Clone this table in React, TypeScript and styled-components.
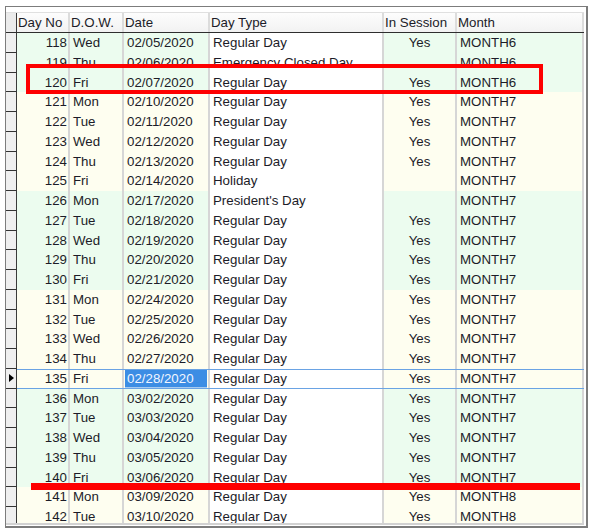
import React from "react";
import styled, { createGlobalStyle, css } from "styled-components";

const Global = createGlobalStyle`
  html, body { margin: 0; padding: 0; background: #ffffff; }
  body { font-family: "Liberation Sans", Arial, sans-serif; }
`;

const ROW_H = 19.75;
const COLS = "11px 53px 54px 86px 174px 73px 127px";
const GREEN = "#ecfcef";
const YELLOW = "#fefef0";
const TEXT = "#1c1c28";

type Tone = "green" | "yellow";

interface Day {
  no: number;
  dow: string;
  date: string;
  type: string;
  session: string;
  month: string;
  tone: Tone;
}

const raw: [number, string, string, string, string, string, Tone][] = [
  [118, "Wed", "02/05/2020", "Regular Day", "Yes", "MONTH6", "green"],
  [119, "Thu", "02/06/2020", "Emergency Closed Day", "", "MONTH6", "green"],
  [120, "Fri", "02/07/2020", "Regular Day", "Yes", "MONTH6", "green"],
  [121, "Mon", "02/10/2020", "Regular Day", "Yes", "MONTH7", "yellow"],
  [122, "Tue", "02/11/2020", "Regular Day", "Yes", "MONTH7", "yellow"],
  [123, "Wed", "02/12/2020", "Regular Day", "Yes", "MONTH7", "yellow"],
  [124, "Thu", "02/13/2020", "Regular Day", "Yes", "MONTH7", "yellow"],
  [125, "Fri", "02/14/2020", "Holiday", "", "MONTH7", "yellow"],
  [126, "Mon", "02/17/2020", "President's Day", "", "MONTH7", "green"],
  [127, "Tue", "02/18/2020", "Regular Day", "Yes", "MONTH7", "green"],
  [128, "Wed", "02/19/2020", "Regular Day", "Yes", "MONTH7", "green"],
  [129, "Thu", "02/20/2020", "Regular Day", "Yes", "MONTH7", "green"],
  [130, "Fri", "02/21/2020", "Regular Day", "Yes", "MONTH7", "green"],
  [131, "Mon", "02/24/2020", "Regular Day", "Yes", "MONTH7", "yellow"],
  [132, "Tue", "02/25/2020", "Regular Day", "Yes", "MONTH7", "yellow"],
  [133, "Wed", "02/26/2020", "Regular Day", "Yes", "MONTH7", "yellow"],
  [134, "Thu", "02/27/2020", "Regular Day", "Yes", "MONTH7", "yellow"],
  [135, "Fri", "02/28/2020", "Regular Day", "Yes", "MONTH7", "yellow"],
  [136, "Mon", "03/02/2020", "Regular Day", "Yes", "MONTH7", "green"],
  [137, "Tue", "03/03/2020", "Regular Day", "Yes", "MONTH7", "green"],
  [138, "Wed", "03/04/2020", "Regular Day", "Yes", "MONTH7", "green"],
  [139, "Thu", "03/05/2020", "Regular Day", "Yes", "MONTH7", "green"],
  [140, "Fri", "03/06/2020", "Regular Day", "Yes", "MONTH7", "green"],
  [141, "Mon", "03/09/2020", "Regular Day", "Yes", "MONTH8", "yellow"],
  [142, "Tue", "03/10/2020", "Regular Day", "Yes", "MONTH8", "yellow"],
];

const days: Day[] = raw.map(([no, dow, date, type, session, month, tone]) => ({
  no, dow, date, type, session, month, tone,
}));

const SELECTED = 135;
const CLIPPED = 119;

const Page = styled.div`
  position: relative;
  width: 592px;
  height: 532px;
  box-sizing: border-box;
  padding: 6px 0 0 5px;
  overflow: hidden;
`;

const Frame = styled.div`
  width: 583px;
  box-sizing: border-box;
  border: 1px solid #7c7c7c;
  border-right-width: 2px;
  border-bottom-width: 2px;
  padding: 5px 2px 1px 0;
  background: #ffffff;
`;

const Grid = styled.div`
  width: 578px;
  font-size: 13.3px;
  color: ${TEXT};
`;

const HeaderRow = styled.div`
  display: grid;
  grid-template-columns: ${COLS};
  height: 21px;
  box-sizing: border-box;
  border-top: 1px solid #e0e0e0;
  border-bottom: 1px solid #2e2e2e;
  background: linear-gradient(#fdfdfd, #f2f2f2);
`;

const HeaderCorner = styled.div`
  background: #ebebeb;
  border-right: 1px solid #3a3a3a;
`;

const HeaderCell = styled.div`
  line-height: 19px;
  padding-left: 1px;
  white-space: nowrap;
  overflow: hidden;
  border-right: 2px solid #dcdcdc;
`;

const Body = styled.div`
  height: 490px;
  overflow: hidden;
  border-bottom: 2px solid #d2d2d2;
`;

const selectedLines = css`
  &::before,
  &::after {
    content: "";
    position: absolute;
    left: 11px;
    right: -3px;
    height: 1px;
    background: #6aa3e4;
    z-index: 1;
  }
  &::before { top: 0; }
  &::after { bottom: 0; }
`;

const Row = styled.div<{ $selected?: boolean }>`
  position: relative;
  display: grid;
  grid-template-columns: ${COLS};
  height: ${ROW_H}px;
  ${(p) => p.$selected && selectedLines}
`;

const Indicator = styled.div`
  display: flex;
  align-items: center;
  justify-content: center;
  box-sizing: border-box;
  background: #efefef;
  border-right: 1px solid #3a3a3a;
  border-bottom: 1px solid #333333;
`;

const Pointer = styled.span`
  width: 0;
  height: 0;
  border-left: 5px solid #000000;
  border-top: 4px solid transparent;
  border-bottom: 4px solid transparent;
  margin-left: 1px;
`;

const Cell = styled.div<{ $tone: Tone | "white"; $align?: "left" | "right" | "center" }>`
  box-sizing: border-box;
  background: ${(p) => (p.$tone === "green" ? GREEN : p.$tone === "yellow" ? YELLOW : "#ffffff")};
  border-right: 2px solid #d6d6d6;
  text-align: ${(p) => p.$align ?? "left"};
  padding: ${(p) => (p.$align === "right" ? "0 1px 0 0" : p.$align === "center" ? "0" : "0 0 0 3px")};
  white-space: nowrap;
  overflow: hidden;
`;

const CellText = styled.span<{ $clip?: boolean }>`
  display: block;
  height: 100%;
  line-height: ${ROW_H}px;
  ${(p) => p.$clip && css`clip-path: inset(0 0 8.5px 0);`}
`;

const ActiveText = styled.span`
  display: block;
  margin: 1px 1px 0 -2px;
  padding-left: 2px;
  height: 17.75px;
  line-height: 17.75px;
  box-sizing: border-box;
  background: #3c8de4;
  border-bottom: 1px solid #a8cbf0;
  color: #f2f6ff;
`;

const RedBox = styled.div`
  position: absolute;
  left: 26px;
  top: 64px;
  width: 517px;
  height: 30px;
  box-sizing: border-box;
  border: 4px solid #fe0000;
  pointer-events: none;
`;

const RedLine = styled.div`
  position: absolute;
  left: 31px;
  top: 483px;
  width: 549px;
  height: 7px;
  background: #fe0000;
  pointer-events: none;
`;

const headers = ["Day No", "D.O.W.", "Date", "Day Type", "In Session", "Month"];

function DayRow({ d }: { d: Day }) {
  const selected = d.no === SELECTED;
  const clip = d.no === CLIPPED;
  return (
    <Row $selected={selected}>
      <Indicator>{selected && <Pointer />}</Indicator>
      <Cell $tone={d.tone} $align="right">
        <CellText $clip={clip}>{d.no}</CellText>
      </Cell>
      <Cell $tone={d.tone}>
        <CellText $clip={clip}>{d.dow}</CellText>
      </Cell>
      <Cell $tone={d.tone}>
        {selected ? <ActiveText>{d.date}</ActiveText> : <CellText $clip={clip}>{d.date}</CellText>}
      </Cell>
      <Cell $tone="white">
        <CellText $clip={clip}>{d.type}</CellText>
      </Cell>
      <Cell $tone={d.tone} $align="center">
        <CellText $clip={clip}>{d.session}</CellText>
      </Cell>
      <Cell $tone={d.tone}>
        <CellText $clip={clip}>{d.month}</CellText>
      </Cell>
    </Row>
  );
}

export default function App() {
  return (
    <>
      <Global />
      <Page>
        <Frame>
          <Grid>
            <HeaderRow>
              <HeaderCorner />
              {headers.map((h) => (
                <HeaderCell key={h}>{h}</HeaderCell>
              ))}
            </HeaderRow>
            <Body>
              {days.map((d) => (
                <DayRow key={d.no} d={d} />
              ))}
            </Body>
          </Grid>
        </Frame>
        <RedBox />
        <RedLine />
      </Page>
    </>
  );
}
